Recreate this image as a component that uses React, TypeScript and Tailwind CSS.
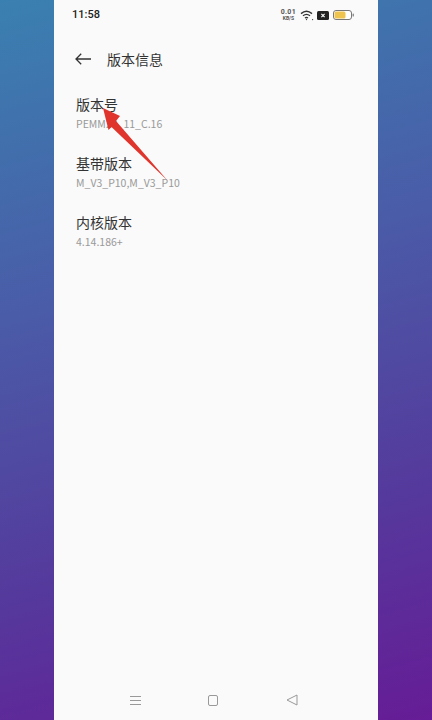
const font = { fontFamily: '"Noto Sans CJK SC", "Noto Sans", sans-serif' };

const rows = [
  { title: "版本号", sub: "PEMM20_11_C.16" },
  { title: "基带版本", sub: "M_V3_P10,M_V3_P10" },
  { title: "内核版本", sub: "4.14.186+" },
];

function StatusIcons() {
  return (
    <div className="flex items-center">
      <div className="flex flex-col items-center font-['Roboto',sans-serif] text-[#555]">
        <span className="text-[7px] font-bold leading-[7px] tracking-[0.3px]">0.01</span>
        <span className="text-[5px] font-bold leading-[5px]">KB/S</span>
      </div>
      <svg className="ml-[4px]" width="14" height="11" viewBox="0 0 14 11" fill="none" stroke="#333" strokeWidth="1.4">
        <path d="M1 3.6C4.5 0.6 8.5 0.6 12 3.6" />
        <path d="M3 5.8C5.2 4 7.8 4 10 5.8" />
        <path d="M5 8C5.9 7.3 7.1 7.3 8 8" />
        <circle cx="6.5" cy="9.6" r="0.7" fill="#333" stroke="none" />
        <circle cx="12.6" cy="9.6" r="0.6" fill="#333" stroke="none" />
      </svg>
      <svg className="ml-[3px]" width="12" height="9" viewBox="0 0 12 9">
        <rect width="12" height="9" rx="1.5" fill="#222" />
        <path d="M4.4 2.8L7.6 6.2M7.6 2.8L4.4 6.2" stroke="#fff" strokeWidth="1.1" />
      </svg>
      <svg className="ml-[4px]" width="21" height="10" viewBox="0 0 21 10">
        <rect x="0.5" y="0.5" width="18" height="9" rx="2.5" fill="#fff" stroke="#777" />
        <rect x="1.5" y="1.5" width="11" height="7" rx="1.5" fill="#eec44f" />
        <rect x="19.6" y="3.5" width="1.2" height="3" rx="0.6" fill="#777" />
      </svg>
    </div>
  );
}

export default function App() {
  return (
    <div
      className="flex h-[720px] w-[432px] justify-center overflow-hidden bg-[linear-gradient(165deg,#3a80b0_0%,#4a5ca8_38%,#55399c_72%,#661c96_100%)]"
      style={font}
    >
      <div className="relative flex w-[324px] flex-col bg-[#fafafa]">
        <div className="flex h-[30px] items-center justify-between pl-[18px] pr-[24px]">
          <span className="font-['Roboto',sans-serif] text-[11px] font-medium text-[#222]">11:58</span>
          <StatusIcons />
        </div>

        <div className="mt-[14px] flex h-[30px] items-center pl-[21px]">
          <svg width="16" height="12" viewBox="0 0 16 12" fill="none" stroke="#333" strokeWidth="1.3">
            <path d="M16 6H1M6.2 0.8L1 6L6.2 11.2" />
          </svg>
          <span className="ml-[16px] text-[14px] leading-[20px] text-[#333]">版本信息</span>
        </div>

        <div className="mt-[20px] flex flex-col gap-[20px] pl-[22px]">
          {rows.map((r) => (
            <div key={r.title} className="flex h-[39px] flex-col">
              <span className="text-[14px] leading-[20px] text-[#333]">{r.title}</span>
              <span className="text-[10.5px] leading-[19px] text-[#999]">{r.sub}</span>
            </div>
          ))}
        </div>

        {/* red annotation arrow */}
        <svg className="absolute left-[40px] top-[100px]" width="80" height="85" viewBox="0 0 80 85">
          <path d="M9 8L26 16L22 21L73.5 80.5L17.5 27L14.5 30Z" fill="#e0352d" />
        </svg>

        <div className="mt-auto flex h-[40px] items-center">
          <div className="ml-[76px] flex flex-col gap-[3px]">
            <div className="h-[1px] w-[11px] bg-[#999]" />
            <div className="h-[1px] w-[11px] bg-[#999]" />
            <div className="h-[1px] w-[11px] bg-[#999]" />
          </div>
          <div className="ml-[67px] h-[11px] w-[10px] rounded-[2px] border border-[#999]" />
          <svg className="ml-[68px]" width="12" height="12" viewBox="0 0 12 12" fill="none" stroke="#999">
            <path d="M11 1V11L1 6Z" strokeLinejoin="round" />
          </svg>
        </div>
      </div>
    </div>
  );
}
